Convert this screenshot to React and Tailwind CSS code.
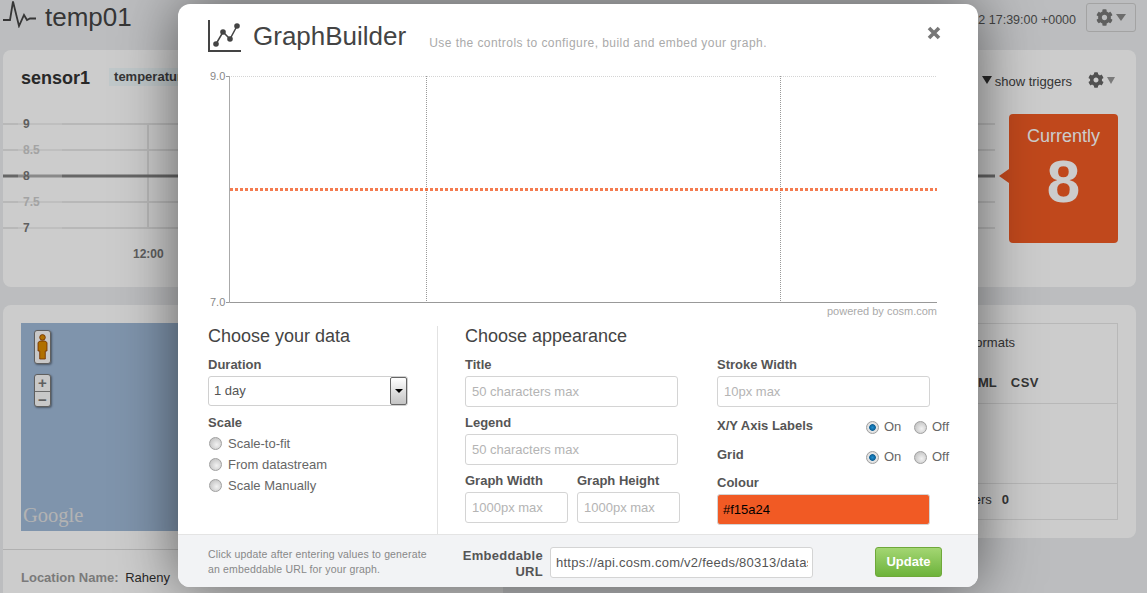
import React from 'react';
import { FaCog } from 'react-icons/fa';

const Radio = ({ checked }) => (
  <span
    className={`inline-block w-[13px] h-[13px] rounded-full border border-[#a0a0a0] shrink-0 ${
      checked
        ? 'bg-[radial-gradient(circle,#1f8fd0_0,#0b5f96_38%,#e8e8e8_48%,#d0d0d0_100%)]'
        : 'bg-[radial-gradient(circle_at_60%_60%,#f2f2f2_0,#c9c9c9_70%,#b5b5b5_100%)]'
    }`}
  />
);

const Label = ({ children, className = '' }) => (
  <div className={`text-[13px] leading-[16px] font-bold text-[#555] ${className}`}>{children}</div>
);

const TextBox = ({ placeholder, className = '' }) => (
  <div className={`h-[31px] flex items-center px-[6px] border border-[#d4d4d4] rounded-[3px] bg-white text-[13px] text-[#b4b4b4] ${className}`}>
    {placeholder}
  </div>
);

const RadioPair = () => (
  <div className="flex items-center text-[13px] text-[#666]">
    <Radio checked />
    <span className="ml-[5px] w-[30px]">On</span>
    <Radio />
    <span className="ml-[5px]">Off</span>
  </div>
);

const Chart = () => (
  <svg width="732" height="240" className="block">
    <text x="2" y="10" fontSize="11" fill="#888">9.0</text>
    <text x="2" y="236" fontSize="11" fill="#888">7.0</text>
    <line x1="21" x2="729" y1="6.5" y2="6.5" stroke="#d4d4d4" strokeDasharray="1 1" />
    <line x1="18" x2="21" y1="6.5" y2="6.5" stroke="#999" />
    <line x1="18" x2="729" y1="232.5" y2="232.5" stroke="#999" />
    <line x1="21.5" x2="21.5" y1="6" y2="233" stroke="#aaa" />
    <line x1="218.5" x2="218.5" y1="6" y2="233" stroke="#999" strokeDasharray="1 1" />
    <line x1="572.5" x2="572.5" y1="6" y2="233" stroke="#999" strokeDasharray="1 1" />
    <line x1="22" x2="729" y1="119.5" y2="119.5" stroke="#f15a24" strokeOpacity="0.8" strokeWidth="3" strokeDasharray="3 2" />
  </svg>
);

const Modal = () => (
  <div className="absolute left-[178px] top-[4px] w-[800px] h-[583px] bg-white rounded-[12px] shadow-[0_0_60px_rgba(0,0,0,0.55)] overflow-hidden flex flex-col">
    <div className="relative h-[66px] pl-[30px] pt-[15px] flex items-start">
      <svg width="34" height="34" viewBox="0 0 34 34" className="shrink-0">
        <path d="M1 1V32H33" fill="none" stroke="#444" strokeWidth="2" />
        <path d="M8 25L15 13L22 20L29 7" fill="none" stroke="#444" strokeWidth="1.5" />
        <circle cx="8" cy="25" r="2.8" fill="#444" />
        <circle cx="15" cy="13" r="2.8" fill="#444" />
        <circle cx="22" cy="20" r="2.8" fill="#444" />
        <circle cx="29" cy="7" r="2.8" fill="#444" />
      </svg>
      <div className="ml-[11px] text-[26px] leading-[34px] text-[#444]">GraphBuilder</div>
      <div className="ml-[23px] mt-[16px] text-[12px] leading-[16px] tracking-[0.44px] text-[#aaa]">
        Use the controls to configure, build and embed your graph.
      </div>
      <svg width="14" height="14" viewBox="0 0 14 14" className="absolute left-[749px] top-[22px]">
        <path d="M2 2L12 12M12 2L2 12" stroke="#777" strokeWidth="3.6" />
      </svg>
    </div>

    <div className="pl-[30px]">
      <Chart />
      <div className="w-[729px] -mt-[5px] text-right text-[11px] leading-[13px] text-[#aaa]">powered by cosm.com</div>
    </div>

    <div className="flex pl-[30px] mt-[8px] h-[208px]">
      <div className="w-[230px] border-r border-[#e2e2e2] pr-[30px]">
        <div className="text-[18px] leading-[20px] text-[#444]">Choose your data</div>
        <Label className="mt-[11px]">Duration</Label>
        <div className="mt-[3px] h-[30px] w-[200px] flex items-center justify-between border border-[#d0d0d0] rounded-[3px] pl-[5px] text-[13px] text-[#555]">
          1 day
          <span className="w-[17px] h-[28px] border border-[#666] rounded-[2px] bg-gradient-to-b from-white to-[#c4c4c4] flex items-center justify-center">
            <span className="w-0 h-0 border-x-[4px] border-x-transparent border-t-[4px] border-t-black" />
          </span>
        </div>
        <Label className="mt-[9px]">Scale</Label>
        <div className="mt-[6px] flex flex-col gap-[8px] text-[13px] leading-[13px] text-[#666]">
          <div className="flex items-center gap-[6px] pl-[1px]"><Radio />Scale-to-fit</div>
          <div className="flex items-center gap-[6px] pl-[1px]"><Radio />From datastream</div>
          <div className="flex items-center gap-[6px] pl-[1px]"><Radio />Scale Manually</div>
        </div>
      </div>

      <div className="w-[279px] pl-[27px]">
        <div className="text-[18px] leading-[20px] text-[#444]">Choose appearance</div>
        <Label className="mt-[11px]">Title</Label>
        <TextBox placeholder="50 characters max" className="mt-[3px] w-[213px]" />
        <Label className="mt-[8px]">Legend</Label>
        <TextBox placeholder="50 characters max" className="mt-[3px] w-[213px]" />
        <div className="mt-[8px] flex gap-[9px]">
          <div>
            <Label>Graph Width</Label>
            <TextBox placeholder="1000px max" className="mt-[3px] w-[103px]" />
          </div>
          <div>
            <Label>Graph Height</Label>
            <TextBox placeholder="1000px max" className="mt-[3px] w-[103px]" />
          </div>
        </div>
      </div>

      <div className="w-[232px] pt-[31px]">
        <Label>Stroke Width</Label>
        <TextBox placeholder="10px max" className="mt-[3px] w-[213px]" />
        <div className="mt-[11px] h-[18px] flex items-center justify-between">
          <Label className="mb-[2px]">X/Y Axis Labels</Label>
          <RadioPair />
        </div>
        <div className="mt-[12px] h-[18px] flex items-center justify-between">
          <Label className="mb-[5px]">Grid</Label>
          <RadioPair />
        </div>
        <Label className="mt-[9px]">Colour</Label>
        <div className="mt-[3px] w-[213px] h-[31px] flex items-center px-[5px] border border-[#d4d4d4] rounded-[3px] bg-[#f15a24] text-[13px] text-black">
          #f15a24
        </div>
      </div>
    </div>

    <div className="flex-1 bg-[#f2f3f5] border-t border-[#e4e4e4] flex items-start pl-[30px]">
      <div className="w-[224px] mr-[16px] mt-[12px] text-[10.5px] leading-[15px] tracking-[0.15px] text-[#888]">
        Click update after entering values to generate an embeddable URL for your graph.
      </div>
      <div className="w-[96px] ml-[-1px] mt-[13px] text-right text-[13px] leading-[16px] tracking-[0.3px] font-bold text-[#555]">
        Embeddable URL
      </div>
      <input
        readOnly
        value="https://api.cosm.com/v2/feeds/80313/datastreams"
        className="ml-[7px] mt-[12px] w-[263px] h-[31px] pl-[5px] pr-[4px] border border-[#d4d4d4] rounded-[3px] bg-white text-[13px] tracking-[0.25px] text-[#555]"
      />
      <div className="ml-[62px] mt-[12px] w-[67px] h-[30px] flex items-center justify-center rounded-[3px] border border-[#6fa83a] bg-gradient-to-b from-[#a3d672] to-[#6db33a] text-[13px] font-bold text-white">
        Update
      </div>
    </div>
  </div>
);

const Background = () => (
  <div className="h-[593px] overflow-hidden bg-[#ebedef] px-[3px] text-[#333]">
    {/* Header */}
    <div className="h-[50px] flex items-start pt-[3px]">
      <svg width="36" height="28" viewBox="0 0 36 28" className="shrink-0 mt-[-3px]">
        <path d="M0 20H7L10 1.5L16 26L21 15L24 20L27 18.5H33" fill="none" stroke="#444" strokeWidth="1.8" />
      </svg>
      <div className="ml-[6px] text-[26px] leading-[28px] text-[#444]">temp01</div>
      <div className="ml-auto mt-[10px] text-[12.5px] leading-[14px] text-[#555]">Tue 12 Jun 2012 17:39:00 +0000</div>
      <div className="ml-[10px] mr-[8px] w-[50px] h-[29px] flex items-center justify-center gap-[3px] border border-[#ccc] rounded-[3px]">
        <FaCog size={17} className="text-[#777]" />
        <span className="w-0 h-0 border-x-[5px] border-x-transparent border-t-[7px] border-t-[#888]" />
      </div>
    </div>

    {/* Sensor card */}
    <div className="w-[1133px] h-[237px] bg-white rounded-[8px] pt-[18px]">
      <div className="h-[46px] flex items-start pl-[18px]">
        <span className="text-[18px] leading-[20px] font-bold text-[#333]">sensor1</span>
        <span className="ml-[19px] h-[18px] px-[5px] bg-[#f0fafd] text-[13px] leading-[18px] font-bold text-[#444]">temperature</span>
        <span className="ml-auto mt-[8px] w-0 h-0 border-x-[5px] border-x-transparent border-t-[8px] border-t-[#333]" />
        <span className="ml-[3px] mt-[6px] text-[13px] leading-[16px] text-[#444]">show triggers</span>
        <FaCog size={16} className="ml-[16px] mt-[4px] text-[#666]" />
        <span className="ml-[3px] mr-[21px] mt-[9px] w-0 h-0 border-x-[4px] border-x-transparent border-t-[7px] border-t-[#999]" />
      </div>
      <div className="relative flex">
        <svg width="992" height="150" className="block shrink-0">
          <g stroke="#e6e6e6" strokeWidth="2">
            <line x1="0" x2="992" y1="10" y2="10" />
            <line x1="0" x2="992" y1="36" y2="36" />
            <line x1="0" x2="992" y1="88" y2="88" />
            <line x1="0" x2="992" y1="114" y2="114" />
            <line x1="145" x2="145" y1="10" y2="114" />
          </g>
          <line x1="0" x2="992" y1="62" y2="62" stroke="#808080" strokeWidth="3" />
          <rect x="15" y="0" width="44" height="130" fill="#fff" fillOpacity="0.35" />
          <g fontSize="12" fontWeight="bold" fill="#777">
            <text x="20" y="14">9</text>
            <text x="20" y="66">8</text>
            <text x="20" y="118">7</text>
            <text x="130" y="144">12:00</text>
          </g>
          <g fontSize="12" fontWeight="bold" fill="#ccc">
            <text x="20" y="40">8.5</text>
            <text x="20" y="92">7.5</text>
          </g>
        </svg>
        <div className="relative ml-[14px] w-[109px] h-[129px] bg-[#f15a24] rounded-[4px] text-white text-center">
          <span className="absolute left-[-10px] top-[55px] w-0 h-0 border-y-[7px] border-y-transparent border-r-[10px] border-r-[#f15a24]" />
          <div className="pt-[10px] text-[18px] leading-[24px]">Currently</div>
          <div className="text-[60px] leading-[68px] font-bold">8</div>
        </div>
      </div>
    </div>

    {/* Location / formats */}
    <div className="mt-[18px] w-[1133px] flex items-start">
      <div className="w-[500px] h-[288px] bg-white rounded-tl-[8px]">
        <div className="relative ml-[18px] mt-[18px] h-[208px] w-[440px] bg-[#9fb9d8]">
          <div className="absolute left-[13px] top-[7px] w-[17px] h-[34px] bg-[#fafafa] border border-[#777] rounded-[3px] shadow-[1px_1px_2px_rgba(0,0,0,0.4)] flex justify-center pt-[3px]">
            <svg width="11" height="26" viewBox="0 0 11 26">
              <circle cx="5.5" cy="3.4" r="2.8" fill="#dd8c00" stroke="#8a3a00" strokeWidth="0.8" />
              <path d="M1 8.5L3 7H8L10 8.5V17H8.3V25H2.7V17H1Z" fill="#dd8c00" stroke="#8a3a00" strokeWidth="0.8" />
            </svg>
          </div>
          <div className="absolute left-[13px] top-[51px] w-[17px] h-[33px] bg-[#fafafa] border border-[#777] rounded-[3px] shadow-[1px_1px_2px_rgba(0,0,0,0.4)] flex flex-col text-[#777] text-[15px] leading-[16px] font-bold text-center">
            <span className="border-b border-[#888]">+</span>
            <span>−</span>
          </div>
          <div className="absolute left-[2px] bottom-[3px] font-['Liberation_Serif',serif] text-[20.5px] leading-[26px] text-[#e0e0e0]">Google</div>
        </div>
        <div className="mt-[18px] border-t border-[#ddd] pl-[18px] pt-[20px] text-[13px] leading-[16px]">
          <span className="font-bold text-[#999]">Location Name: </span>
          <span className="ml-[3px] text-[#333]">Raheny</span>
        </div>
      </div>
      <div className="flex-1 h-[233px] bg-white rounded-br-[8px] rounded-tr-[8px] pl-[300px] pt-[18px] pr-[18px]">
        <div className="h-[197px] border border-[#e6e6e6] flex flex-col text-[13px] text-[#444]">
          <div className="h-[80px] border-b border-[#e6e6e6] flex flex-col items-end">
            <div className="w-full text-right pr-[102px] pt-[11px] leading-[16px]">Feed formats</div>
            <div className="w-full text-right pr-[78px] pt-[24px] leading-[16px] font-bold">
              XML<span className="ml-[14px] tracking-[0.5px]">CSV</span>
            </div>
          </div>
          <div className="h-[80px] border-b border-[#e6e6e6]" />
          <div className="pt-[8px] text-right pr-[108px] leading-[16px]">
            Triggers<span className="ml-[10px] font-bold">0</span>
          </div>
        </div>
      </div>
    </div>
  </div>
);

export default function App() {
  return (
    <div className="relative h-[593px] overflow-hidden font-['Liberation_Sans',Arial,sans-serif]">
      <Background />
      <div className="absolute inset-0 bg-black/20" />
      <Modal />
    </div>
  );
}
